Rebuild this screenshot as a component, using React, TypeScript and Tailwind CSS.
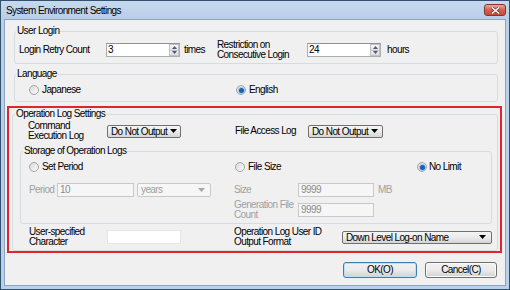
import React from 'react';

const Radio: React.FC<{ checked?: boolean }> = ({ checked }) => (
  <span className="w-[10px] h-[10px] shrink-0 rounded-full border border-[#a4a4a4] bg-gradient-to-br from-[#d9d9d9] to-[#fbfbfb] flex items-center justify-center">
    {checked && <span className="w-[5px] h-[5px] rounded-full bg-[#1d5fae] shadow-[0_0_0_1px_#9cc8ec]" />}
  </span>
);

const SpinBox: React.FC<{ value: string }> = ({ value }) => (
  <div className="w-[74px] h-[14px] flex bg-white border border-[#abadb3] border-t-[#8e9199]">
    <span className="flex-1 pl-[1px] leading-[12px]">{value}</span>
    <div className="w-[10px] flex flex-col">
      <span className="flex-1 flex items-center justify-center border border-[#c3c3c3] bg-gradient-to-b from-[#f7f7f7] to-[#e1e1e1]">
        <svg width="5" height="3" viewBox="0 0 5 3">
          <path d="M2.5 0L5 3H0z" fill="#4a5a78" />
        </svg>
      </span>
      <span className="flex-1 flex items-center justify-center border border-t-0 border-[#c3c3c3] bg-gradient-to-b from-[#f0f0f0] to-[#dcdcdc]">
        <svg width="5" height="3" viewBox="0 0 5 3">
          <path d="M0 0h5L2.5 3z" fill="#4a5a78" />
        </svg>
      </span>
    </div>
  </div>
);

const Arrow: React.FC<{ color?: string }> = ({ color = '#000' }) => (
  <svg width="7" height="4" viewBox="0 0 7 4" className="shrink-0">
    <path d="M0 0h7L3.5 4z" fill={color} />
  </svg>
);

// button-looking combo boxes (DropDownList style)
const DropButton: React.FC<{ className: string; children: React.ReactNode }> = ({ className, children }) => (
  <div className={`h-[13px] flex items-center rounded-[2px] border border-[#707070] bg-gradient-to-b from-[#f4f4f4] via-[#ebebeb] to-[#d4d4d4] pl-[3px] ${className}`}>
    <span className="leading-[11px] whitespace-nowrap">{children}</span>
    <Arrow />
  </div>
);

const DisabledInput: React.FC<{ className: string; children: React.ReactNode }> = ({ className, children }) => (
  <div className={`h-[14px] bg-[#f6f6f6] border border-[#c9c9c9] pl-[2px] leading-[12px] text-[#8a8a8a] ${className}`}>
    {children}
  </div>
);

const groupBox = 'border border-[#d5dcdf] rounded-[3px]';

export default function App() {
  return (
    <div className="w-[510px] h-[290px] flex flex-col border border-[#33506d] bg-[#b9d0e9] text-black text-[10px] tracking-[-0.6px] leading-[12px] font-['Liberation_Sans',Arial,sans-serif]">
      {/* Title bar */}
      <div className="h-[18px] flex items-start justify-between pl-[5px] pr-[3px] bg-gradient-to-b from-[#c6d9ee] to-[#b9cfe8]">
        <span className="mt-[4px]">System Environment Settings</span>
        <div className="mt-[3px] w-[22px] h-[12px] rounded-[3px] border border-[#7c3a2f] bg-gradient-to-b from-[#e8a898] via-[#d0604c] to-[#c84a36] flex items-center justify-center">
          <svg width="9" height="7" viewBox="0 0 9 7">
            <path d="M1 0.5L8 6.5M8 0.5L1 6.5" stroke="#5a2018" strokeWidth="2.6" />
            <path d="M1 0.5L8 6.5M8 0.5L1 6.5" stroke="#ffffff" strokeWidth="1.6" />
          </svg>
        </div>
      </div>

      {/* Client area */}
      <div className="flex-1 mx-[3px] mb-[3px] border border-[#8aa4c1] bg-[#f0f0f0] flex flex-col">
        {/* User Login */}
        <fieldset className={`ml-[9px] mr-[7px] mt-[5px] pl-[1px] pb-[6px] ${groupBox}`}>
          <legend className="px-[1px]">User Login</legend>
          <div className="mt-[6px] h-[14px] pl-[3px] flex items-center">
            <span className="w-[87px]">Login Retry Count</span>
            <SpinBox value="3" />
            <span className="ml-[4px] w-[33px]">times</span>
            <span className="w-[90px] leading-[10px]">
              Restriction on
              <br />
              Consecutive Login
            </span>
            <SpinBox value="24" />
            <span className="ml-[6px]">hours</span>
          </div>
        </fieldset>

        {/* Language */}
        <fieldset className={`ml-[9px] mr-[7px] mt-[4px] pl-[1px] pb-[5px] ${groupBox}`}>
          <legend className="px-[1px]">Language</legend>
          <div className="mt-[4px] h-[12px] pl-[13px] flex items-center">
            <label className="w-[207px] flex items-center gap-[3px]">
              <Radio />
              Japanese
            </label>
            <label className="flex items-center gap-[3px]">
              <Radio checked />
              English
            </label>
          </div>
        </fieldset>

        {/* Highlighted operation log block */}
        <div className="ml-[2px] mr-[3px] mt-[4px] border-2 border-[#e0262c]">
          <fieldset className={`ml-[3px] mr-[2px] pl-[2px] pb-[4px] ${groupBox}`}>
            <legend className="px-[1px]">Operation Log Settings</legend>
            <div className="mt-[2px] h-[18px] pl-[13px] flex items-center">
              <span className="w-[79px] leading-[10px]">
                Command
                <br />
                Execution Log
              </span>
              <DropButton className="w-[74px] gap-[3px]">Do Not Output</DropButton>
              <span className="ml-[54px] w-[73px]">File Access Log</span>
              <DropButton className="w-[75px] gap-[3px]">Do Not Output</DropButton>
            </div>

            {/* Storage of Operation Logs */}
            <fieldset className={`mt-[5px] mx-[5px] pl-[2px] pb-[4px] ${groupBox}`}>
              <legend className="px-[1px]">Storage of Operation Logs</legend>
              <div className="mt-[4px] h-[12px] pl-[6px] flex items-center">
                <label className="w-[206px] flex items-center gap-[3px]">
                  <Radio />
                  Set Period
                </label>
                <label className="w-[182px] flex items-center gap-[3px]">
                  <Radio />
                  File Size
                </label>
                <label className="flex items-center gap-[2px]">
                  <Radio checked />
                  No Limit
                </label>
              </div>
              <div className="mt-[9px] h-[15px] pl-[6px] flex items-center text-[#a0a0a0]">
                <span className="w-[28px]">Period</span>
                <DisabledInput className="w-[77px]">10</DisabledInput>
                <div className="ml-[3px] w-[74px] h-[14px] flex items-center justify-between pl-[3px] pr-[5px] bg-[#f6f6f6] border border-[#c9c9c9] rounded-[2px]">
                  <span>years</span>
                  <Arrow color="#a8a8a8" />
                </div>
                <span className="ml-[23px] w-[64px]">Size</span>
                <DisabledInput className="w-[76px]">9999</DisabledInput>
                <span className="ml-[4px]">MB</span>
              </div>
              <div className="mt-[4px] h-[18px] pl-[211px] flex items-center text-[#a0a0a0]">
                <span className="w-[64px] leading-[10px]">
                  Generation File
                  <br />
                  Count
                </span>
                <DisabledInput className="w-[76px]">9999</DisabledInput>
              </div>
            </fieldset>

            <div className="mt-[4px] h-[18px] pl-[14px] flex items-center">
              <span className="w-[78px] leading-[10px]">
                User-specified
                <br />
                Character
              </span>
              <div className="w-[74px] h-[14px] bg-white border border-[#e2e5ea]" />
              <span className="ml-[53px] w-[108px] leading-[10px]">
                Operation Log User ID
                <br />
                Output Format
              </span>
              <DropButton className="w-[150px] pr-[5px] justify-between">Down Level Log-on Name</DropButton>
            </div>
          </fieldset>
        </div>

        {/* Dialog buttons */}
        <div className="mt-[9px] pr-[8px] flex justify-end gap-[8px]">
          <button className="w-[74px] h-[16px] rounded-[3px] border border-[#3c7fb1] bg-gradient-to-b from-[#f2f2f2] via-[#ebebeb] to-[#d2d2d2] shadow-[inset_0_0_0_1px_#b8e0f8] leading-[12px]">
            OK(O)
          </button>
          <button className="w-[72px] h-[16px] rounded-[3px] border border-[#707070] bg-gradient-to-b from-[#f2f2f2] via-[#ebebeb] to-[#d2d2d2] shadow-[inset_0_0_0_1px_#fbfbfb] leading-[12px]">
            Cancel(C)
          </button>
        </div>
      </div>
    </div>
  );
}
